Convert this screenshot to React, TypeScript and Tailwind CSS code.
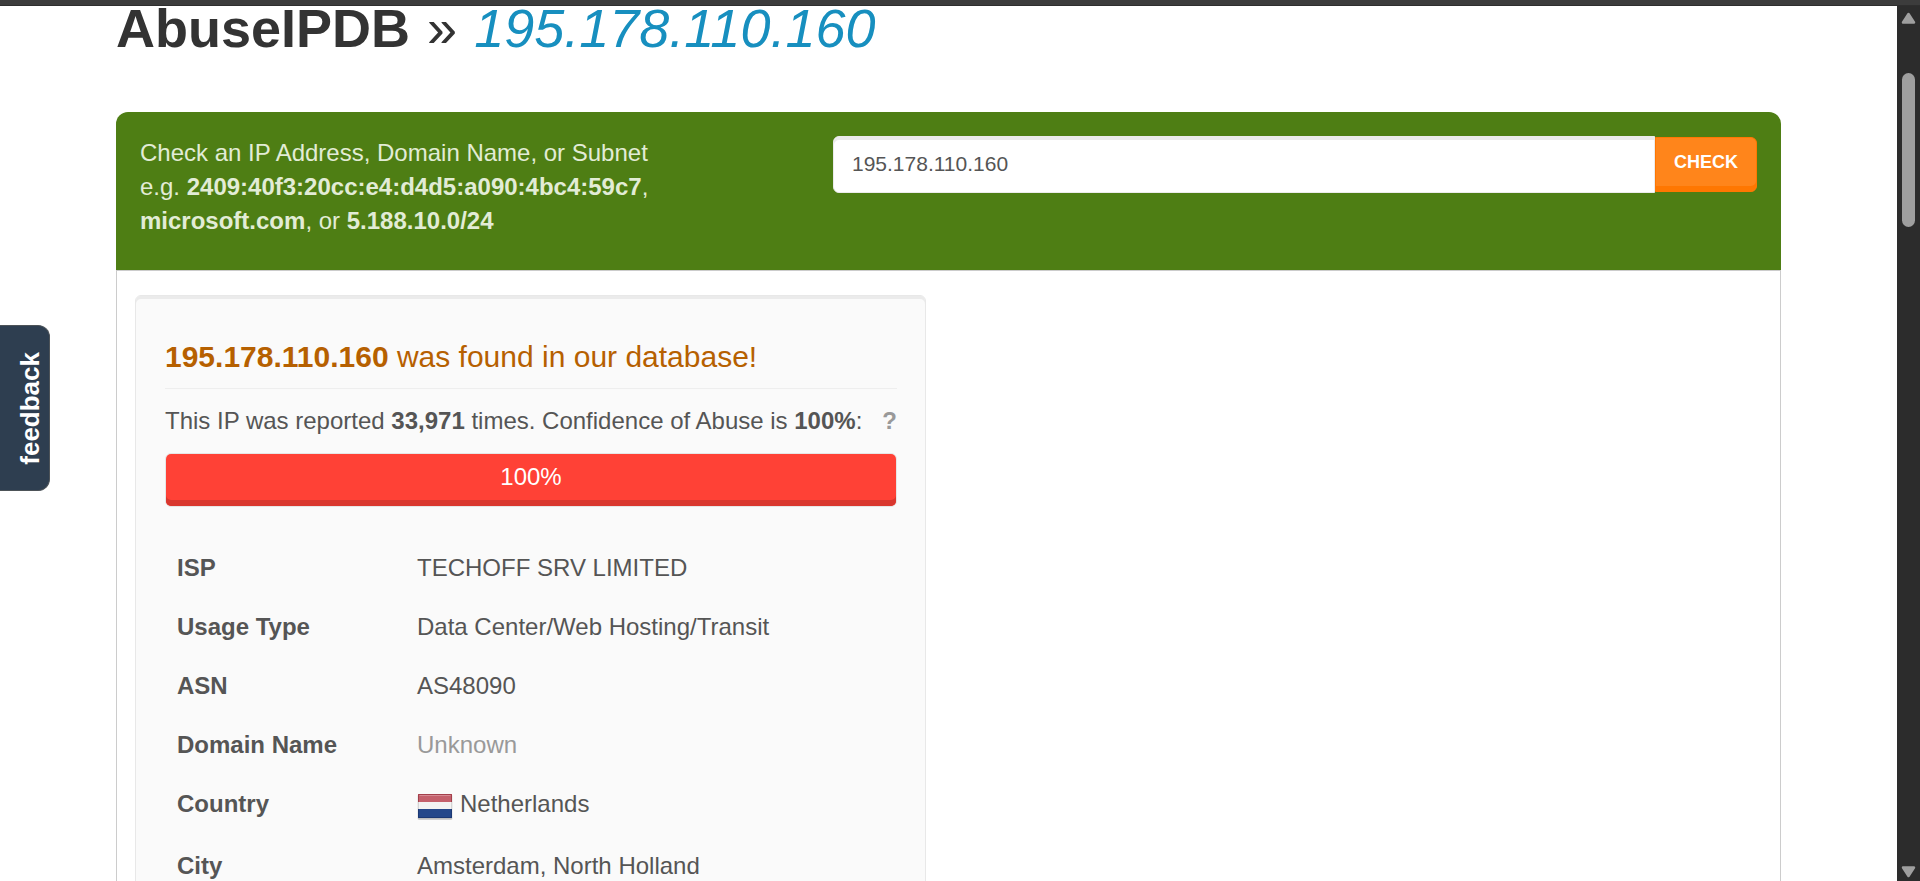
import React from "react";

type Row = { label: string; value: React.ReactNode };

function NetherlandsFlag() {
  return (
    <svg width="36" height="34" viewBox="0 -2 36 34" className="mr-[7px] inline-block align-[-12px]" role="img" aria-label="Flag of the Netherlands">
      <rect x="0.5" y="2.5" width="35" height="25.500" rx="1.5" fill="#000" opacity="0.1" />
      <rect x="1" y="3" width="34" height="24.500" rx="1" fill="#000" opacity="0.15" />
      <rect x="1" y="2" width="34" height="8" fill="#c4606c" />
      <rect x="1" y="10" width="34" height="7" fill="#f3f3f3" />
      <rect x="1" y="17" width="34" height="9" fill="#24478a" />
      <path d="M1.500 10V2.500h33V10" fill="none" stroke="#a33f4b" />
      <path d="M2.5 3.500h31" stroke="#d58a93" />
      <path d="M1.5 10v7M34.5 10v7" stroke="#d5d5d5" />
      <path d="M1.5 17v8.5h33V17" fill="none" stroke="#1b3873" />
    </svg>
  );
}

const rows: Row[] = [
  { label: "ISP", value: "TECHOFF SRV LIMITED" },
  { label: "Usage Type", value: "Data Center/Web Hosting/Transit" },
  { label: "ASN", value: "AS48090" },
  { label: "Domain Name", value: <span className="text-[#999]">Unknown</span> },
  { label: "Country", value: <><NetherlandsFlag />Netherlands</> },
  { label: "City", value: "Amsterdam, North Holland" },
];

function CheckForm() {
  return (
    <div className="flex rounded-t-xl bg-[#4e7e14] px-6 pt-6 pb-8 text-[#e2ecd6]">
      <div className="w-3/7">
        <p className="max-w-[600px]">
          <label htmlFor="ip">Check an IP Address, Domain Name, or Subnet</label>
          <br />
          e.g. <b>2409:40f3:20cc:e4:d4d5:a090:4bc4:59c7</b>, <b>microsoft.com</b>, or <b>5.188.10.0/24</b>
        </p>
      </div>
      <form className="flex w-4/7 items-start" onSubmit={(e) => e.preventDefault()}>
        <input
          id="ip"
          defaultValue="195.178.110.160"
          className="h-[57px] min-w-0 flex-1 rounded-l-md border border-[#ebebeb] bg-white px-[18px] pb-[2px] text-[21px] text-[#555] shadow-[inset_0_3px_0_#ebebeb] outline-none"
        />
        <button className="mt-px h-[55px] rounded-r-md border border-[#ff7701] bg-[#ff851b] px-[18px] pb-[5px] text-[18px] leading-6 font-bold text-white shadow-[inset_0_-5px_0_#ff7701]">
          CHECK
        </button>
      </form>
    </div>
  );
}

function ReportCard() {
  return (
    <section className="rounded-md border border-[#e8e8e8] bg-[#fafafa] pt-10 pr-7 pb-7 pl-[29px] shadow-[inset_0_3px_0_#ebebeb]">
      <h3 className="border-b border-[#eee] pb-[11px] text-[30px] leading-[41px] text-[#b66000]">
        <b>195.178.110.160</b> was found in our database!
      </h3>
      <p className="mt-[15px] flex justify-between">
        <span>
          This IP was reported <b>33,971</b> times. Confidence of Abuse is <b>100%</b>:
        </span>
        <a href="#confidence" className="font-bold text-[#999]">?</a>
      </p>
      <div className="mt-[15px] rounded-md border border-[#e6e6e6]">
        <div className="h-[52px] rounded-[5px] bg-[#ff4136] pt-[6px] text-center text-white shadow-[inset_0_-6px_0_#d9372e]">
          100%
        </div>
      </div>
      <table className="mt-8 w-full table-fixed">
        <tbody>
          {rows.map((row) => (
            <tr key={row.label} className="align-baseline">
              <th scope="row" className="w-[240px] px-3 pt-3 pb-[13px] text-left font-bold">{row.label}</th>
              <td className="px-3 pt-3 pb-[13px]">{row.value}</td>
            </tr>
          ))}
        </tbody>
      </table>
    </section>
  );
}

function ScrollTrack() {
  return (
    <div className="flex w-[23px] shrink-0 flex-col items-center bg-[#2c2c2c] pt-[6px] pb-[3px]" aria-hidden="true">
      <svg width="15" height="12" viewBox="0 0 15 12" className="shrink-0">
        <path d="M7.5 2 13 10.500H2Z" fill="#9f9f9f" stroke="#9f9f9f" strokeWidth="2.500" strokeLinejoin="round" />
      </svg>
      <div className="mt-[49px] h-[154px] w-[13px] shrink-0 rounded-full bg-[#9f9f9f]" />
      <svg width="15" height="12" viewBox="0 0 15 12" className="mt-auto shrink-0">
        <path d="M7.500 10 13 1.500H2Z" fill="#9f9f9f" stroke="#9f9f9f" strokeWidth="2.500" strokeLinejoin="round" />
      </svg>
    </div>
  );
}

export default function App() {
  return (
    <div className="flex h-screen flex-col overflow-hidden bg-white font-['Liberation_Sans',Arial,sans-serif] text-[24px] leading-[34px] text-[#555]">
      <div className="h-[6px] shrink-0 border-b border-[#2e2e2e] bg-[#3c3c3c]" />
      <div className="flex min-h-0 flex-1">
        <div className="min-w-0 flex-1">
          <main className="mx-auto max-w-[1665px]">
            <h1 className="mb-[62px] text-[54px] leading-[44px] text-[#333]">
              <b>AbuseIPDB</b> <span className="mx-[2px]">»</span> <em className="text-[#178fbf]">195.178.110.160</em>
            </h1>
            <CheckForm />
            <div className="grid grid-cols-2 gap-[45px] border border-[#ccc] px-[18px] pt-6">
              <ReportCard />
            </div>
          </main>
        </div>
        <ScrollTrack />
      </div>
      <button className="fixed top-[325px] left-0 flex h-[166px] w-[50px] items-center justify-center rounded-r-xl border border-l-0 border-[#4d5358] bg-[#2e3e50] pl-[10px] text-[26px] leading-[30px] font-bold text-white">
        <span className="rotate-180 [writing-mode:vertical-rl]">feedback</span>
      </button>
    </div>
  );
}
